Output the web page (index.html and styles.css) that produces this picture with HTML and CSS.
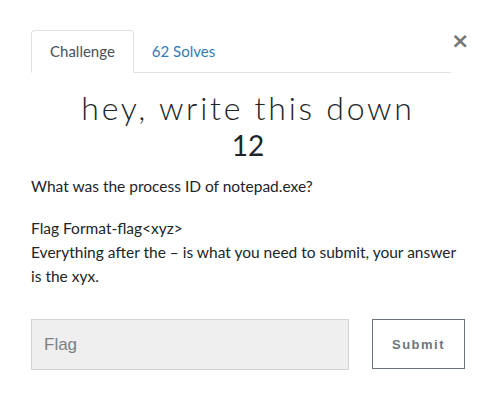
FILE: index.html
```html
<!DOCTYPE html>
<html lang="en">
<head>
  <meta charset="UTF-8" />
  <title>Challenge</title>
  <link rel="stylesheet" href="styles.css">
</head>
<body>
  <div class="modal">
    <div class="modal-head">
      <ul class="tabs">
        <li class="tab active">Challenge</li>
        <li class="tab">62 Solves</li>
      </ul>
      <button class="close">&times;</button>
    </div>

    <h2 class="chal-name">hey, write this down</h2>
    <h3 class="chal-value">12</h3>

    <div class="chal-desc">
      <p>What was the process ID of notepad.exe?</p>
      <p>Flag Format-flag&lt;xyz&gt;<br>Everything after the – is what you need to submit, your answer is the xyx.</p>
    </div>

    <div class="submit-row">
      <input type="text" class="flag-input" placeholder="Flag">
      <button class="submit-btn">Submit</button>
    </div>
  </div>
</body>
</html>
```

FILE: styles.css
```css
body {
  margin: 0;
  font-family: Lato, "Open Sans", sans-serif;
  color: #212529;
  background: #fff;
}

.modal {
  width: 434px;
  padding: 30px 31px 0 31px;
}

.modal-head {
  display: flex;
  align-items: flex-start;
}

.tabs {
  flex: 1;
  display: flex;
  list-style: none;
  margin: 0;
  padding: 0;
  border-bottom: 1px solid #dee2e6;
}

.tab {
  padding: 11px 17px 11px 17px;
  font-size: 15px;
  line-height: 19px;
  color: #337ab7;
  border: 1px solid transparent;
  border-radius: 4px 4px 0 0;
  margin-bottom: -1px;
}

.tab.active {
  padding: 11px 18px 11px 18px;
  color: #495057;
  border-color: #dee2e6 #dee2e6 #fff;
  background: #fff;
}

.close {
  background: none;
  border: none;
  padding: 0;
  margin: 2px 0 0 0;
  width: 14px;
  font-size: 22px;
  line-height: 18px;
  font-weight: bold;
  color: #777;
  font-family: "DejaVu Sans", sans-serif;
  text-align: right;
}

.chal-name {
  margin: 16px 0 0 0;
  text-align: center;
  font-weight: 300;
  font-size: 32px;
  line-height: 38px;
  letter-spacing: 2.75px;
}

.chal-value {
  margin: 0;
  text-align: center;
  font-weight: 400;
  font-size: 28px;
  line-height: 36px;
}

.chal-desc {
  font-size: 15.5px;
  line-height: 24px;
  margin-top: 11px;
}

.chal-desc p {
  margin: 0 0 18px 0;
}

.submit-row {
  display: grid;
  grid-template-columns: 318px 93px;
  justify-content: space-between;
  margin-top: 31px;
}

.flag-input {
  height: 51px;
  box-sizing: border-box;
  border: 1px solid #d0d4d8;
  background: #efefef;
  padding: 0 12px;
  font-family: "Liberation Sans", sans-serif;
  font-size: 17px;
  color: #495057;
}

.flag-input::placeholder {
  color: #7a8086;
}

.submit-btn {
  height: 50px;
  box-sizing: border-box;
  border: 1px solid #6c757d;
  background: #fff;
  color: #6c757d;
  font-family: "Liberation Sans", sans-serif;
  font-weight: bold;
  font-size: 13px;
  letter-spacing: 1.5px;
  padding-top: 2px;
}
```
